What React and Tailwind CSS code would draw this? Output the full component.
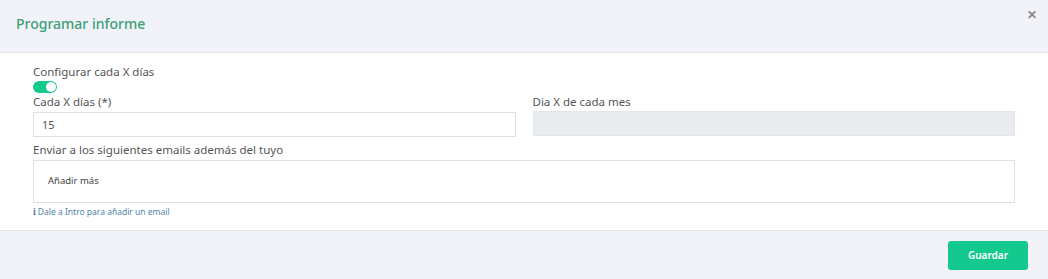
import React, { useState } from 'react';

const FONT = "'Noto Sans', 'Open Sans', sans-serif";

export default function App() {
  const [everyX, setEveryX] = useState(true);
  const [days, setDays] = useState('15');

  return (
    <div style={{ fontFamily: FONT }} className="w-[1048px] h-[279px] bg-white flex flex-col">
      <div className="h-[53px] shrink-0 bg-[#f2f3f8] border-b border-[#e2e4ea] flex items-start justify-between">
        <h2 className="pl-4 pt-[14px] text-[14px] font-medium text-[#3d9e79] leading-[20px]">Programar informe</h2>
        <button className="pr-[11px] pt-[9px] text-[12px] font-bold text-[#888] leading-none">✕</button>
      </div>

      <div className="flex-1 pl-[33px] pr-[33px] pt-[11px] text-[#555]">
        <div className="text-[11.5px] leading-[15px]">Configurar cada X días</div>
        <button
          onClick={() => setEveryX(v => !v)}
          className="mt-[2px] w-[24px] h-[12px] rounded-full bg-[#14c98e] flex items-center justify-end pr-[1px]"
        >
          <span className="w-[10px] h-[10px] rounded-full bg-white block" />
        </button>
        <div className="grid grid-cols-2 gap-x-[17px] mt-[1px]">
          <div>
            <div className="text-[11.5px] leading-[15px] mb-[2px]">Cada X días (*)</div>
            <input
              value={days}
              onChange={e => setDays(e.target.value)}
              className="w-full h-[25px] border border-[#dcdfe4] px-[8px] text-[11px] text-[#555] outline-none"
            />
          </div>
          <div>
            <div className="text-[11.5px] leading-[15px] mb-[2px]">Dia X de cada mes</div>
            <div className="w-full h-[25px] border border-[#e2e5e9] bg-[#e9ecef]" />
          </div>
        </div>
        <div className="text-[11.5px] leading-[15px] mt-[5px] mb-[3px]">Enviar a los siguientes emails además del tuyo</div>
        <div className="h-[43px] border border-[#dcdfe4] flex items-center pl-[14px]">
          <span className="text-[9.5px] text-[#444]">Añadir más</span>
        </div>
        <div className="mt-[3px] text-[8.5px] text-[#4f86a6] flex items-center gap-[2px]">
          <span className="font-bold font-serif text-[9px] text-[#3e7896]">i</span>
          <span>Dale a Intro para añadir un email</span>
        </div>
      </div>

      <div className="h-[49px] shrink-0 bg-[#f2f3f8] border-t border-[#e2e4ea] flex items-center justify-end pr-[20px]">
        <button className="w-[80px] h-[29px] rounded-[3px] bg-[#14c98e] text-white text-[10px] font-semibold">Guardar</button>
      </div>
    </div>
  );
}
